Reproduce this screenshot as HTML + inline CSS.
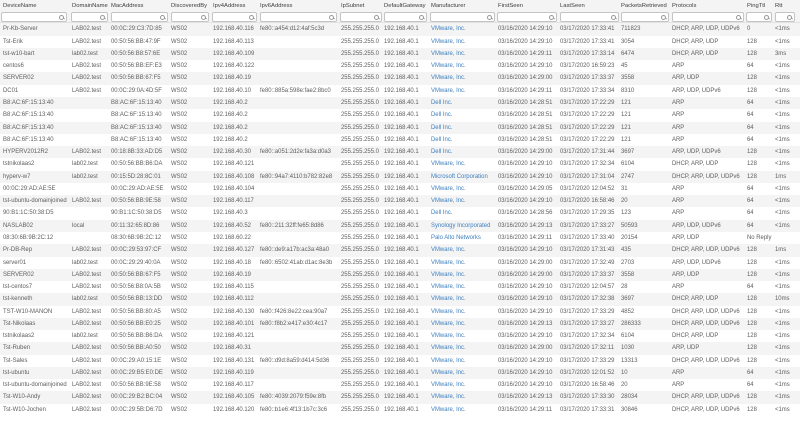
<!DOCTYPE html>
<html><head><meta charset="utf-8"><style>
*{margin:0;padding:0;box-sizing:border-box}
body{width:800px;height:408px;overflow:hidden;background:#fff;font-family:"Liberation Sans",sans-serif;font-size:5.95px;color:#5e5e5e;position:relative}
.hd{position:absolute;left:0;top:0;width:800px;height:23.4px;background:#f4f4f4;border-bottom:1px solid #e2e2e2}
.hd span{position:absolute;top:3px;color:#3c3c3c;font-size:5.85px}
.hd i{position:absolute;top:12px;height:9.5px;background:#fff;border:1px solid #c4c4c4;border-radius:2px}
.hd i:after{content:"";position:absolute;right:2px;top:1.5px;width:3px;height:3px;border:0.8px solid #999;border-radius:50%}
.hd i:before{content:"";position:absolute;right:1.2px;top:5px;width:2px;height:0.8px;background:#999;transform:rotate(45deg)}
.r{position:absolute;left:0;width:800px;height:12.27px;line-height:12.27px;white-space:nowrap}
.r:nth-child(odd){background:#f4f4f4}
.r span{position:absolute;top:0}
.r span:nth-child(1),.hd span:nth-of-type(1){left:3px}
.r span:nth-child(2),.hd span:nth-of-type(2){left:72px}
.r span:nth-child(3),.hd span:nth-of-type(3){left:111px}
.r span:nth-child(4),.hd span:nth-of-type(4){left:171px}
.r span:nth-child(5),.hd span:nth-of-type(5){left:213px}
.r span:nth-child(6),.hd span:nth-of-type(6){left:260px}
.r span:nth-child(7),.hd span:nth-of-type(7){left:341px}
.r span:nth-child(8),.hd span:nth-of-type(8){left:384px}
.r span:nth-child(9),.hd span:nth-of-type(9){left:431px}
.r span:nth-child(10),.hd span:nth-of-type(10){left:498px}
.r span:nth-child(11),.hd span:nth-of-type(11){left:560px}
.r span:nth-child(12),.hd span:nth-of-type(12){left:621px}
.r span:nth-child(13),.hd span:nth-of-type(13){left:672px}
.r span:nth-child(14),.hd span:nth-of-type(14){left:747px}
.r span:nth-child(15),.hd span:nth-of-type(15){left:775px}
.r span:nth-child(9){color:#3d7fbf}
#rows{position:absolute;left:0;top:23.4px;width:800px;height:400px}
</style></head><body>
<div class="hd">
<span>DeviceName</span><span>DomainName</span><span>MacAddress</span><span>DiscoveredBy</span><span>Ipv4Address</span><span>Ipv6Address</span><span>IpSubnet</span><span>DefaultGateway</span><span>Manufacturer</span><span>FirstSeen</span><span>LastSeen</span><span>PacketsRetrieved</span><span>Protocols</span><span>PingTtl</span><span>Rtt</span>
<i style="left:1px;width:66px"></i><i style="left:71px;width:37px"></i><i style="left:111px;width:57px"></i><i style="left:171px;width:38px"></i><i style="left:212px;width:45px"></i><i style="left:260px;width:77px"></i><i style="left:340px;width:42px"></i><i style="left:384px;width:43px"></i><i style="left:430px;width:65px"></i><i style="left:497px;width:60px"></i><i style="left:560px;width:59px"></i><i style="left:621px;width:48px"></i><i style="left:672px;width:72px"></i><i style="left:746px;width:26px"></i><i style="left:775px;width:20px"></i>
</div>
<div id="rows">
<div class="r" style="top:0px"><span>Pr-Kb-Server</span><span>LAB02.test</span><span>00:0C:29:C3:7D:85</span><span>WS02</span><span>192.168.40.116</span><span>fe80::a454:d12:4af:5c3d</span><span>255.255.255.0</span><span>192.168.40.1</span><span>VMware, Inc.</span><span>03/16/2020 14:29:10</span><span>03/17/2020 17:33:41</span><span>711823</span><span>DHCP, ARP, UDP, UDPv6</span><span>0</span><span>&lt;1ms</span></div>
<div class="r" style="top:12.27px"><span>Tst-Erik</span><span>LAB02.test</span><span>00:50:56:BB:47:9F</span><span>WS02</span><span>192.168.40.113</span><span></span><span>255.255.255.0</span><span>192.168.40.1</span><span>VMware, Inc.</span><span>03/16/2020 14:29:10</span><span>03/17/2020 17:33:41</span><span>3054</span><span>DHCP, ARP, UDP</span><span>128</span><span>&lt;1ms</span></div>
<div class="r" style="top:24.54px"><span>tst-w10-bart</span><span>lab02.test</span><span>00:50:56:B8:57:6E</span><span>WS02</span><span>192.168.40.109</span><span></span><span>255.255.255.0</span><span>192.168.40.1</span><span>VMware, Inc.</span><span>03/16/2020 14:29:11</span><span>03/17/2020 17:33:14</span><span>6474</span><span>DHCP, ARP, UDP</span><span>128</span><span>3ms</span></div>
<div class="r" style="top:36.81px"><span>centos6</span><span>LAB02.test</span><span>00:50:56:BB:EF:E3</span><span>WS02</span><span>192.168.40.122</span><span></span><span>255.255.255.0</span><span>192.168.40.1</span><span>VMware, Inc.</span><span>03/16/2020 14:29:10</span><span>03/17/2020 16:59:23</span><span>45</span><span>ARP</span><span>64</span><span>&lt;1ms</span></div>
<div class="r" style="top:49.08px"><span>SERVER02</span><span>LAB02.test</span><span>00:50:56:BB:67:F5</span><span>WS02</span><span>192.168.40.19</span><span></span><span>255.255.255.0</span><span>192.168.40.1</span><span>VMware, Inc.</span><span>03/16/2020 14:29:00</span><span>03/17/2020 17:33:37</span><span>3558</span><span>ARP, UDP</span><span>128</span><span>&lt;1ms</span></div>
<div class="r" style="top:61.35px"><span>DC01</span><span>LAB02.test</span><span>00:0C:29:0A:4D:5F</span><span>WS02</span><span>192.168.40.10</span><span>fe80::885a:598e:fae2:8bc0</span><span>255.255.255.0</span><span>192.168.40.1</span><span>VMware, Inc.</span><span>03/16/2020 14:29:11</span><span>03/17/2020 17:33:34</span><span>8310</span><span>ARP, UDP, UDPv6</span><span>128</span><span>&lt;1ms</span></div>
<div class="r" style="top:73.62px"><span>B8:AC:6F:15:13:40</span><span></span><span>B8:AC:6F:15:13:40</span><span>WS02</span><span>192.168.40.2</span><span></span><span>255.255.255.0</span><span>192.168.40.1</span><span>Dell Inc.</span><span>03/16/2020 14:28:51</span><span>03/17/2020 17:22:29</span><span>121</span><span>ARP</span><span>64</span><span>&lt;1ms</span></div>
<div class="r" style="top:85.89px"><span>B8:AC:6F:15:13:40</span><span></span><span>B8:AC:6F:15:13:40</span><span>WS02</span><span>192.168.40.2</span><span></span><span>255.255.255.0</span><span>192.168.40.1</span><span>Dell Inc.</span><span>03/16/2020 14:28:51</span><span>03/17/2020 17:22:29</span><span>121</span><span>ARP</span><span>64</span><span>&lt;1ms</span></div>
<div class="r" style="top:98.16px"><span>B8:AC:6F:15:13:40</span><span></span><span>B8:AC:6F:15:13:40</span><span>WS02</span><span>192.168.40.2</span><span></span><span>255.255.255.0</span><span>192.168.40.1</span><span>Dell Inc.</span><span>03/16/2020 14:28:51</span><span>03/17/2020 17:22:29</span><span>121</span><span>ARP</span><span>64</span><span>&lt;1ms</span></div>
<div class="r" style="top:110.43px"><span>B8:AC:6F:15:13:40</span><span></span><span>B8:AC:6F:15:13:40</span><span>WS02</span><span>192.168.40.2</span><span></span><span>255.255.255.0</span><span>192.168.40.1</span><span>Dell Inc.</span><span>03/16/2020 14:28:51</span><span>03/17/2020 17:22:29</span><span>121</span><span>ARP</span><span>64</span><span>&lt;1ms</span></div>
<div class="r" style="top:122.7px"><span>HYPERV2012R2</span><span>LAB02.test</span><span>00:18:8B:33:AD:D5</span><span>WS02</span><span>192.168.40.30</span><span>fe80::a051:2d2e:fa3a:d0a3</span><span>255.255.255.0</span><span>192.168.40.1</span><span>Dell Inc.</span><span>03/16/2020 14:29:00</span><span>03/17/2020 17:31:44</span><span>3697</span><span>ARP, UDP, UDPv6</span><span>128</span><span>&lt;1ms</span></div>
<div class="r" style="top:134.97px"><span>tstnikolaas2</span><span>lab02.test</span><span>00:50:56:BB:B6:DA</span><span>WS02</span><span>192.168.40.121</span><span></span><span>255.255.255.0</span><span>192.168.40.1</span><span>VMware, Inc.</span><span>03/16/2020 14:29:10</span><span>03/17/2020 17:32:34</span><span>6104</span><span>DHCP, ARP, UDP</span><span>128</span><span>&lt;1ms</span></div>
<div class="r" style="top:147.24px"><span>hyperv-w7</span><span>lab02.test</span><span>00:15:5D:28:8C:01</span><span>WS02</span><span>192.168.40.108</span><span>fe80::94a7:4110:b782:82e8</span><span>255.255.255.0</span><span>192.168.40.1</span><span>Microsoft Corporation</span><span>03/16/2020 14:29:10</span><span>03/17/2020 17:31:04</span><span>2747</span><span>DHCP, ARP, UDP, UDPv6</span><span>128</span><span>1ms</span></div>
<div class="r" style="top:159.51px"><span>00:0C:29:AD:AE:5E</span><span></span><span>00:0C:29:AD:AE:5E</span><span>WS02</span><span>192.168.40.104</span><span></span><span>255.255.255.0</span><span>192.168.40.1</span><span>VMware, Inc.</span><span>03/16/2020 14:29:05</span><span>03/17/2020 12:04:52</span><span>31</span><span>ARP</span><span>64</span><span>&lt;1ms</span></div>
<div class="r" style="top:171.78px"><span>tst-ubuntu-domainjoined</span><span>LAB02.test</span><span>00:50:56:BB:9E:58</span><span>WS02</span><span>192.168.40.117</span><span></span><span>255.255.255.0</span><span>192.168.40.1</span><span>VMware, Inc.</span><span>03/16/2020 14:29:10</span><span>03/17/2020 16:58:46</span><span>20</span><span>ARP</span><span>64</span><span>&lt;1ms</span></div>
<div class="r" style="top:184.05px"><span>90:B1:1C:50:38:D5</span><span></span><span>90:B1:1C:50:38:D5</span><span>WS02</span><span>192.168.40.3</span><span></span><span>255.255.255.0</span><span>192.168.40.1</span><span>Dell Inc.</span><span>03/16/2020 14:28:56</span><span>03/17/2020 17:29:35</span><span>123</span><span>ARP</span><span>64</span><span>&lt;1ms</span></div>
<div class="r" style="top:196.32px"><span>NASLAB02</span><span>local</span><span>00:11:32:65:8D:86</span><span>WS02</span><span>192.168.40.52</span><span>fe80::211:32ff:fe65:8d86</span><span>255.255.255.0</span><span>192.168.40.1</span><span>Synology Incorporated</span><span>03/16/2020 14:29:13</span><span>03/17/2020 17:33:27</span><span>50593</span><span>ARP, UDP, UDPv6</span><span>64</span><span>&lt;1ms</span></div>
<div class="r" style="top:208.59px"><span>08:30:6B:9B:2C:12</span><span></span><span>08:30:6B:9B:2C:12</span><span>WS02</span><span>192.168.60.22</span><span></span><span>255.255.255.0</span><span>192.168.40.1</span><span>Palo Alto Networks</span><span>03/16/2020 14:29:11</span><span>03/17/2020 17:33:40</span><span>20154</span><span>ARP, UDP</span><span>No Reply</span><span></span></div>
<div class="r" style="top:220.86px"><span>Pr-DB-Rep</span><span>LAB02.test</span><span>00:0C:29:53:97:CF</span><span>WS02</span><span>192.168.40.127</span><span>fe80::de9:a17b:ac3a:48a0</span><span>255.255.255.0</span><span>192.168.40.1</span><span>VMware, Inc.</span><span>03/16/2020 14:29:10</span><span>03/17/2020 17:31:43</span><span>435</span><span>DHCP, ARP, UDP, UDPv6</span><span>128</span><span>1ms</span></div>
<div class="r" style="top:233.13px"><span>server01</span><span>lab02.test</span><span>00:0C:29:29:40:0A</span><span>WS02</span><span>192.168.40.18</span><span>fe80::6502:41ab:d1ac:8e3b</span><span>255.255.255.0</span><span>192.168.40.1</span><span>VMware, Inc.</span><span>03/16/2020 14:29:00</span><span>03/17/2020 17:32:49</span><span>2703</span><span>ARP, UDP, UDPv6</span><span>128</span><span>&lt;1ms</span></div>
<div class="r" style="top:245.4px"><span>SERVER02</span><span>LAB02.test</span><span>00:50:56:BB:67:F5</span><span>WS02</span><span>192.168.40.19</span><span></span><span>255.255.255.0</span><span>192.168.40.1</span><span>VMware, Inc.</span><span>03/16/2020 14:29:00</span><span>03/17/2020 17:33:37</span><span>3558</span><span>ARP, UDP</span><span>128</span><span>&lt;1ms</span></div>
<div class="r" style="top:257.67px"><span>tst-centos7</span><span>LAB02.test</span><span>00:50:56:B8:0A:5B</span><span>WS02</span><span>192.168.40.115</span><span></span><span>255.255.255.0</span><span>192.168.40.1</span><span>VMware, Inc.</span><span>03/16/2020 14:29:10</span><span>03/17/2020 12:04:57</span><span>28</span><span>ARP</span><span>64</span><span>&lt;1ms</span></div>
<div class="r" style="top:269.94px"><span>tst-kenneth</span><span>lab02.test</span><span>00:50:56:BB:13:DD</span><span>WS02</span><span>192.168.40.112</span><span></span><span>255.255.255.0</span><span>192.168.40.1</span><span>VMware, Inc.</span><span>03/16/2020 14:29:10</span><span>03/17/2020 17:32:38</span><span>3697</span><span>DHCP, ARP, UDP</span><span>128</span><span>10ms</span></div>
<div class="r" style="top:282.21px"><span>TST-W10-MANON</span><span>LAB02.test</span><span>00:50:56:BB:80:A5</span><span>WS02</span><span>192.168.40.130</span><span>fe80::f426:8e22:cea:90a7</span><span>255.255.255.0</span><span>192.168.40.1</span><span>VMware, Inc.</span><span>03/16/2020 14:29:10</span><span>03/17/2020 17:33:29</span><span>4852</span><span>DHCP, ARP, UDP, UDPv6</span><span>128</span><span>&lt;1ms</span></div>
<div class="r" style="top:294.48px"><span>Tst-Nikolaas</span><span>LAB02.test</span><span>00:50:56:BB:E0:25</span><span>WS02</span><span>192.168.40.101</span><span>fe80::f8b2:e417:e30:4c17</span><span>255.255.255.0</span><span>192.168.40.1</span><span>VMware, Inc.</span><span>03/16/2020 14:29:13</span><span>03/17/2020 17:33:27</span><span>286333</span><span>DHCP, ARP, UDP, UDPv6</span><span>128</span><span>&lt;1ms</span></div>
<div class="r" style="top:306.75px"><span>tstnikolaas2</span><span>lab02.test</span><span>00:50:56:BB:B6:DA</span><span>WS02</span><span>192.168.40.121</span><span></span><span>255.255.255.0</span><span>192.168.40.1</span><span>VMware, Inc.</span><span>03/16/2020 14:29:10</span><span>03/17/2020 17:32:34</span><span>6104</span><span>DHCP, ARP, UDP</span><span>128</span><span>&lt;1ms</span></div>
<div class="r" style="top:319.02px"><span>Tst-Ruben</span><span>LAB02.test</span><span>00:50:56:BB:A0:50</span><span>WS02</span><span>192.168.40.31</span><span></span><span>255.255.255.0</span><span>192.168.40.1</span><span>VMware, Inc.</span><span>03/16/2020 14:29:00</span><span>03/17/2020 17:32:11</span><span>1030</span><span>ARP, UDP</span><span>128</span><span>&lt;1ms</span></div>
<div class="r" style="top:331.29px"><span>Tst-Sales</span><span>LAB02.test</span><span>00:0C:29:A0:15:1E</span><span>WS02</span><span>192.168.40.131</span><span>fe80::d9d:8a59:d414:5d36</span><span>255.255.255.0</span><span>192.168.40.1</span><span>VMware, Inc.</span><span>03/16/2020 14:29:10</span><span>03/17/2020 17:33:29</span><span>13313</span><span>DHCP, ARP, UDP, UDPv6</span><span>128</span><span>&lt;1ms</span></div>
<div class="r" style="top:343.56px"><span>tst-ubuntu</span><span>LAB02.test</span><span>00:0C:29:B5:E0:DE</span><span>WS02</span><span>192.168.40.119</span><span></span><span>255.255.255.0</span><span>192.168.40.1</span><span>VMware, Inc.</span><span>03/16/2020 14:29:10</span><span>03/17/2020 12:01:52</span><span>10</span><span>ARP</span><span>64</span><span>&lt;1ms</span></div>
<div class="r" style="top:355.83px"><span>tst-ubuntu-domainjoined</span><span>LAB02.test</span><span>00:50:56:BB:9E:58</span><span>WS02</span><span>192.168.40.117</span><span></span><span>255.255.255.0</span><span>192.168.40.1</span><span>VMware, Inc.</span><span>03/16/2020 14:29:10</span><span>03/17/2020 16:58:46</span><span>20</span><span>ARP</span><span>64</span><span>&lt;1ms</span></div>
<div class="r" style="top:368.1px"><span>Tst-W10-Andy</span><span>LAB02.test</span><span>00:0C:29:B2:BC:04</span><span>WS02</span><span>192.168.40.105</span><span>fe80::4039:2079:f59e:8fb</span><span>255.255.255.0</span><span>192.168.40.1</span><span>VMware, Inc.</span><span>03/16/2020 14:29:13</span><span>03/17/2020 17:33:30</span><span>28034</span><span>DHCP, ARP, UDP, UDPv6</span><span>128</span><span>&lt;1ms</span></div>
<div class="r" style="top:380.37px"><span>Tst-W10-Jochen</span><span>LAB02.test</span><span>00:0C:29:5B:D6:7D</span><span>WS02</span><span>192.168.40.120</span><span>fe80::b1e6:4f13:1b7c:3c6</span><span>255.255.255.0</span><span>192.168.40.1</span><span>VMware, Inc.</span><span>03/16/2020 14:29:11</span><span>03/17/2020 17:33:31</span><span>30846</span><span>DHCP, ARP, UDP, UDPv6</span><span>128</span><span>&lt;1ms</span></div>
</div>
</body></html>
